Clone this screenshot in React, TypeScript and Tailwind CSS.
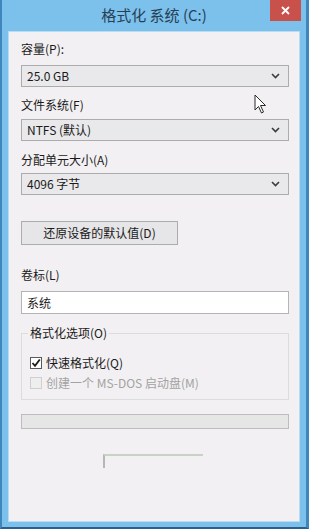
import React from "react";

const font = { fontFamily: '"Noto Sans CJK SC", "Noto Sans", sans-serif' };

function Select({ value }: { value: string }) {
  return (
    <div className="flex h-[22px] items-center justify-between border border-[#acacac] bg-[#e9e8ea] pl-[5px] pr-[8px] text-[12px] text-[#1a1a1a]">
      <span>{value}</span>
      <svg width="9" height="6" viewBox="0 0 9 6">
        <path d="M1 1 L4.5 4.5 L8 1" stroke="#3b3b3b" strokeWidth="1.6" fill="none" />
      </svg>
    </div>
  );
}

function Label({ text, className = "" }: { text: string; className?: string }) {
  return <div className={"text-[12px] leading-[16px] text-[#1a1a1a] " + className}>{text}</div>;
}

export default function App() {
  return (
    <div
      style={font}
      className="relative flex h-[529px] w-[309px] flex-col overflow-hidden border-l-2 border-r-[3px] border-b-2 border-l-[#3f86bd] border-r-[#3f86bd] border-b-[#2f5f86] bg-[#7cc0ec]"
    >
      <div className="relative flex h-[31px] shrink-0 items-center justify-center">
        <span className="text-[15px] text-[#263f55]">格式化 系统 (C:)</span>
        <div className="absolute right-[5px] top-0 flex h-[21px] w-[31px] items-center justify-center bg-[#c9514b]">
          <svg width="9" height="9" viewBox="0 0 9 9">
            <path d="M1 1 L8 8 M8 1 L1 8" stroke="#fff" strokeWidth="1.8" />
          </svg>
        </div>
      </div>

      <div className="mx-[6px] mb-[5px] flex flex-1 flex-col border border-[#b9dcf3] bg-[#f2f0f2] pl-[12px] pr-[10px] pt-[9px]">
        <Label text="容量(P):" />
        <div className="mt-[8px]">
          <Select value="25.0 GB" />
        </div>

        <Label text="文件系统(F)" className="mt-[10px]" />
        <div className="mt-[6px]">
          <Select value="NTFS (默认)" />
        </div>

        <Label text="分配单元大小(A)" className="mt-[11px]" />
        <div className="mt-[5px]">
          <Select value="4096 字节" />
        </div>

        <div className="mt-[26px] flex h-[24px] w-[157px] items-center justify-center border border-[#acacac] bg-[#e6e5e7] text-[12px] text-[#1a1a1a]">
          还原设备的默认值(D)
        </div>

        <Label text="卷标(L)" className="mt-[22px]" />
        <div className="mt-[8px] flex h-[23px] items-center border border-[#b4b4b4] bg-white pl-[5px] text-[12px] text-[#1a1a1a]">
          系统
        </div>

        <div className="relative mt-[19px] h-[67px] border border-[#dcdcdc]">
          <span className="absolute -top-[9px] left-[6px] bg-[#f2f0f2] px-[2px] text-[12px] leading-[16px] text-[#1a1a1a]">
            格式化选项(O)
          </span>
          <div className="mt-[21px] flex items-center pl-[8px]">
            <div className="flex h-[12px] w-[12px] items-center justify-center border border-[#5a5a5a] bg-white">
              <svg width="10" height="10" viewBox="0 0 10 10">
                <path d="M1.5 5 L4 7.8 L8.8 1.5" stroke="#1a1a1a" strokeWidth="1.8" fill="none" />
              </svg>
            </div>
            <span className="ml-[4px] text-[12px] leading-[16px] text-[#1a1a1a]">快速格式化(Q)</span>
          </div>
          <div className="mt-[4px] flex items-center pl-[8px]">
            <div className="h-[12px] w-[12px] border border-[#cfcfcf] bg-[#eeeeee]" />
            <span className="ml-[4px] text-[12px] leading-[16px] text-[#a3a3a3]">创建一个 MS-DOS 启动盘(M)</span>
          </div>
        </div>

        <div className="mt-[14px] h-[15px] border border-[#bdbdbd] bg-[#e6e6e6]" />

        <div className="ml-[82px] mt-[25px] h-[14px] w-[100px] border-l-2 border-t-2 border-l-[#9aa0a0] border-t-[#b5c9b2] opacity-70" />
      </div>

      <svg className="absolute left-[252px] top-[94px]" width="14" height="20" viewBox="0 0 14 20">
        <path d="M1 1 L1 16 L4.5 12.5 L7.5 19 L9.5 18 L6.5 11.5 L11.5 11.5 Z" fill="#fff" stroke="#2a2a2a" strokeWidth="1" strokeLinejoin="round" />
      </svg>
    </div>
  );
}
